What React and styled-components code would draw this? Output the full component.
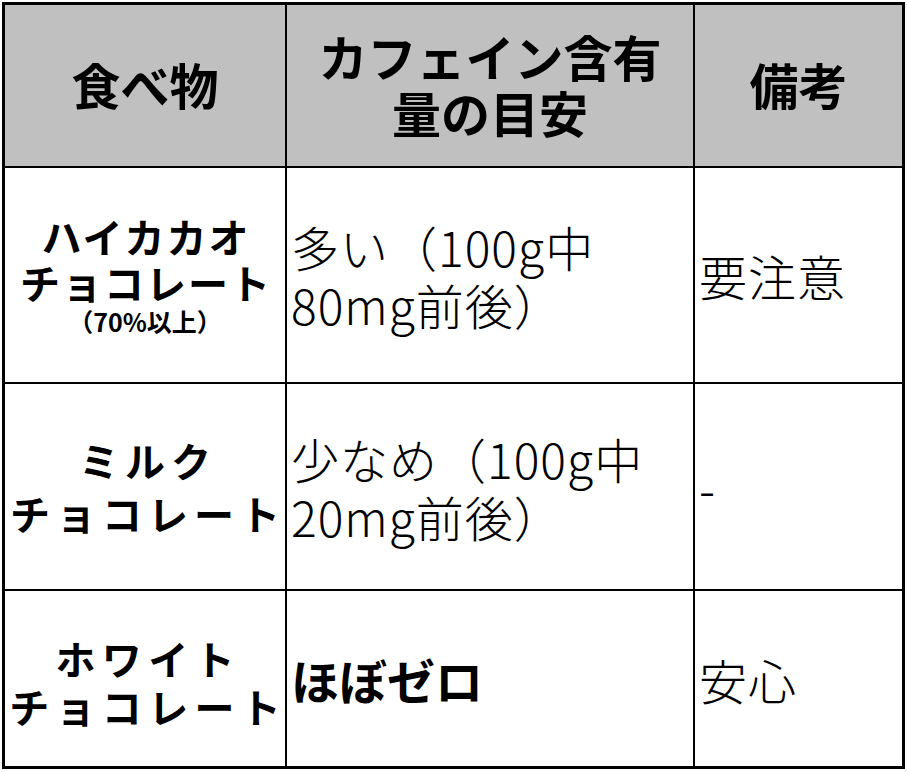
import React from "react";
import styled, { createGlobalStyle } from "styled-components";

const GlobalStyle = createGlobalStyle`
  html, body { margin: 0; padding: 0; background: #ffffff; }
  body { font-family: "Noto Sans CJK JP", "Noto Sans", sans-serif; color: #000; }
`;

const Page = styled.div`
  padding: 2px;
`;

const Table = styled.div`
  display: grid;
  grid-template-columns: 280px 406px 207px;
  grid-template-rows: 161px 214px 205px 175px;
  gap: 2px;
  padding: 3px;
  background: #000;
  width: 903px;
  box-sizing: border-box;
`;

const HeadCell = styled.div`
  background: #c0c0c0;
  display: flex;
  align-items: center;
  justify-content: center;
  text-align: center;
  font-size: 49px;
  font-weight: 700;
  line-height: 56px;
  padding-bottom: 4px;
`;

const NameCell = styled.div`
  background: #fff;
  display: flex;
  flex-direction: column;
  align-items: center;
  justify-content: center;
  text-align: center;
  font-weight: 700;
  padding-top: ${(p) => p.$shift || 0}px;
`;

const NameLine = styled.div`
  font-size: 40px;
  line-height: ${(p) => p.$lh}px;
  letter-spacing: ${(p) => p.$ls}px;
  margin-right: -${(p) => p.$ls}px;
  white-space: nowrap;
`;

const NameNote = styled.div`
  font-size: 25px;
  line-height: 32px;
  white-space: nowrap;
`;

const TextCell = styled.div`
  background: #fff;
  display: flex;
  align-items: center;
  padding-left: 4px;
  font-size: 48px;
  line-height: 58px;
  letter-spacing: ${(p) => (p.$bold ? 0 : 1)}px;
  font-weight: ${(p) => (p.$bold ? 700 : 300)};
  white-space: nowrap;
`;

const rows = [
  {
    name: ["ハイカカオ", "チョコレート"],
    note: "（70%以上）",
    lh: 46,
    ls: 2,
    shift: 0,
    amount: ["多い（100g中", "80mg前後）"],
    remark: "要注意",
  },
  {
    name: ["ミルク", "チョコレート"],
    lh: 53,
    ls: 6,
    shift: 0,
    amount: ["少なめ（100g中", "20mg前後）"],
    remark: "-",
  },
  {
    name: ["ホワイト", "チョコレート"],
    lh: 48,
    ls: 6.3,
    shift: 6,
    amount: ["ほぼゼロ"],
    bold: true,
    remark: "安心",
  },
];

export default function App() {
  return (
    <>
      <GlobalStyle />
      <Page>
        <Table>
          <HeadCell>食べ物</HeadCell>
          <HeadCell>
            <div>
              カフェイン含有
              <br />
              量の目安
            </div>
          </HeadCell>
          <HeadCell>備考</HeadCell>
          {rows.map((r, i) => (
            <React.Fragment key={i}>
              <NameCell $shift={r.shift}>
                {r.name.map((n) => (
                  <NameLine key={n} $lh={r.lh} $ls={r.ls}>
                    {n}
                  </NameLine>
                ))}
                {r.note && <NameNote>{r.note}</NameNote>}
              </NameCell>
              <TextCell $bold={r.bold}>
                <div>
                  {r.amount.map((a, j) => (
                    <React.Fragment key={j}>
                      {j > 0 && <br />}
                      {a}
                    </React.Fragment>
                  ))}
                </div>
              </TextCell>
              <TextCell>{r.remark}</TextCell>
            </React.Fragment>
          ))}
        </Table>
      </Page>
    </>
  );
}
